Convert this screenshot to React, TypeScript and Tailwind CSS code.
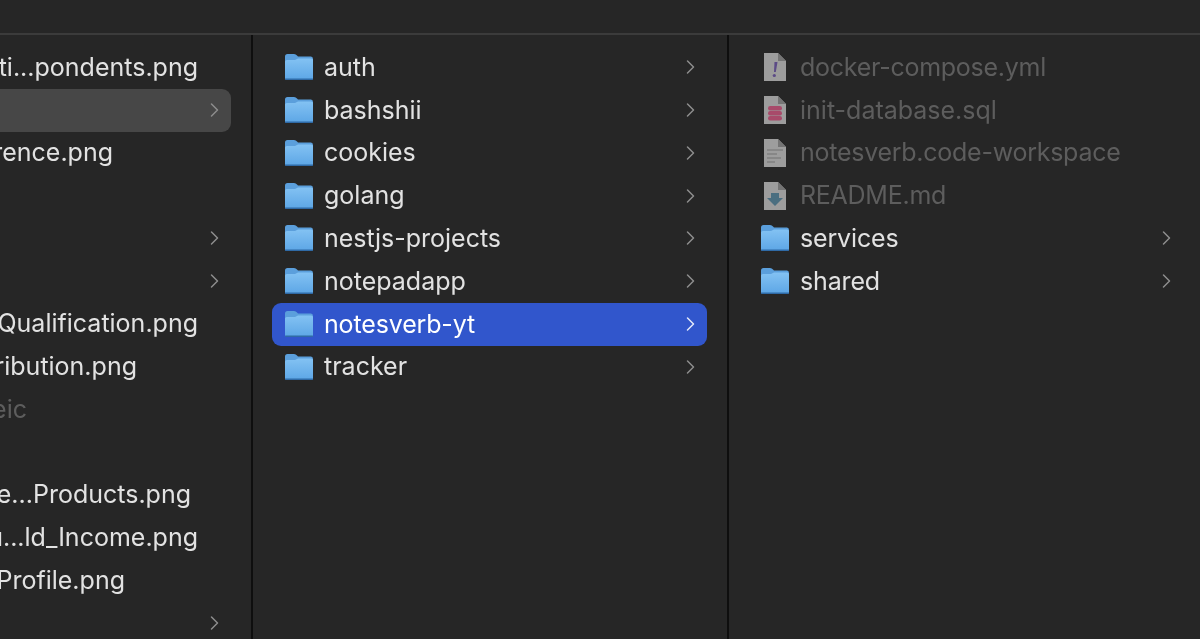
const font = "font-['Inter','Noto_Sans',sans-serif]";

function Chevron({ className = "text-[#8d8d8d]" }: { className?: string }) {
  return (
    <svg width="10" height="16" viewBox="0 0 10 16" fill="none" className={`shrink-0 ${className}`}>
      <path d="M2.500 2 L8.500 8 L2.500 14" stroke="currentColor" strokeWidth="1.500" strokeLinecap="round" strokeLinejoin="round" />
    </svg>
  );
}

function Folder({ id }: { id: string }) {
  return (
    <svg width="30" height="28" viewBox="0 0 30 28" className="shrink-0">
      <defs>
        <linearGradient id={id} x1="0" y1="0" x2="0" y2="1">
          <stop offset="0" stopColor="#83c2f3" />
          <stop offset="1" stopColor="#5ea7e6" />
        </linearGradient>
      </defs>
      <path d="M1 3.500 Q1 1 3.500 1 L10 1 Q12 1 13 2.500 L14 3.500 L27 3.500 Q29 3.500 29 6 L29 25 Q29 27 27 27 L3 27 Q1 27 1 25 Z" fill="#5b9fdc" />
      <path d="M1 8.500 Q1 7 3 7 L11 7 L14 5.500 L27 5.500 Q29 5.500 29 7 L29 25 Q29 26 27 26 L3 26 Q1 26 1 25 Z" fill={`url(#${id})`} />
      <rect x="1" y="25.500" width="28" height="1.500" rx="0.700" fill="#2f6aa6" />
    </svg>
  );
}

function Doc({ children }: { children?: React.ReactNode }) {
  return (
    <svg width="24" height="30" viewBox="0 0 24 30" className="shrink-0">
      <path d="M1 1 L15 1 L23 9 L23 29 L1 29 Z" fill="#9d9d9d" />
      <path d="M15 1 L23 9 L15 9 Z" fill="#747474" />
      {children}
    </svg>
  );
}

const IconWarn = () => (
  <Doc>
    <path d="M11.500 10 L14.500 10 L12.800 20 L11 20 Z" fill="#5b4a86" />
    <circle cx="11.300" cy="23.500" r="1.600" fill="#5b4a86" />
  </Doc>
);
const IconDb = () => (
  <Doc>
    <rect x="5" y="11" width="14" height="4.500" rx="2.200" fill="#a84a6a" />
    <rect x="5" y="16" width="14" height="4.500" rx="2.200" fill="#a84a6a" />
    <rect x="5" y="21" width="14" height="4.500" rx="2.200" fill="#a84a6a" />
  </Doc>
);
const IconLines = () => (
  <Doc>
    <path d="M4 12 H20 M4 16 H14 M4 20 H18 M4 24 H12" stroke="#808080" strokeWidth="1.300" />
  </Doc>
);
const IconMd = () => (
  <Doc>
    <path d="M8 12 H16 V17 H20 L12 25 L4 17 H8 Z" fill="#4a6e80" />
  </Doc>
);

const leftRows: { text?: string; width?: string; chev?: boolean; active?: boolean; dim?: boolean }[] = [
  { text: "Respondents_ti...pondents.png", width: "w-[198px]" },
  { active: true, chev: true },
  { text: "Preference.png", width: "w-[113px]" },
  {},
  { chev: true },
  { chev: true },
  { text: "Education_Qualification.png", width: "w-[198px]" },
  { text: "Age_Distribution.png", width: "w-[137px]" },
  { text: "photo.heic", width: "w-[27px]", dim: true },
  {},
  { text: "Preferred_e...Products.png", width: "w-[191px]" },
  { text: "Annu...ld_Income.png", width: "w-[198px]" },
  { text: "User_Profile.png", width: "w-[125px]" },
  { chev: true },
];

const midRows = ["auth", "bashshii", "cookies", "golang", "nestjs-projects", "notepadapp", "notesverb-yt", "tracker"];

export default function App() {
  return (
    <div className={`${font} w-[1200px] h-[639px] overflow-hidden bg-[#262626] flex flex-col text-[25px] leading-[43px] text-[#e2e2e2] antialiased blur-[0.35px]`}>
      <div className="h-[35px] shrink-0 border-b-2 border-[#3b3b3b]" />
      <div className="flex flex-1 min-h-0">
        <div className="w-[251px] shrink-0 pt-[11px] pr-[20px] overflow-hidden">
          {leftRows.map((r, i) => (
            <div key={i} className={`h-[42.750px] flex items-center justify-between pr-[12px] ${r.active ? "bg-[#474747] rounded-r-[9px]" : ""}`}>
              {r.text ? (
                <span className={`${r.width} flex justify-end overflow-hidden whitespace-nowrap ${r.dim ? "text-[#5d5d5d]" : ""}`}>
                  <span className="shrink-0">{r.text}</span>
                </span>
              ) : (
                <span />
              )}
              {r.chev && <Chevron />}
            </div>
          ))}
        </div>
        <div className="w-[2px] shrink-0 bg-[#0e0e0e]" />
        <div className="w-[474px] shrink-0 pt-[11px] pl-[19px] pr-[20px] overflow-hidden">
          {midRows.map((t) => {
            const sel = t === "notesverb-yt";
            return (
              <div key={t} className={`flex items-center pl-[12px] pr-[12px] gap-[10px] rounded-[9px] ${sel ? "h-[43px] -mb-[0.250px] bg-[#3156cc] text-white tracking-[-0.15px]" : "h-[42.750px]"}`}>
                <Folder id={`f-${t}`} />
                <span className="flex-1 whitespace-nowrap">{t}</span>
                <Chevron className={sel ? "text-[#e4e9fa]" : "text-[#8d8d8d]"} />
              </div>
            );
          })}
        </div>
        <div className="w-[2px] shrink-0 bg-[#0e0e0e]" />
        <div className="flex-1 pt-[11px] pl-[19px] pr-[17px] overflow-hidden">
          {[
            { t: "docker-compose.yml", I: IconWarn, track: "tracking-[-0.26px]" },
            { t: "init-database.sql", I: IconDb, track: "" },
            { t: "notesverb.code-workspace", I: IconLines, track: "tracking-[-0.26px]" },
            { t: "README.md", I: IconMd, track: "tracking-[-0.26px]" },
          ].map(({ t, I, track }) => (
            <div key={t} className={`h-[42.750px] flex items-center pl-[15px] gap-[13px] text-[#5d5d5d] ${track}`}>
              <I />
              <span className="whitespace-nowrap">{t}</span>
            </div>
          ))}
          {["services", "shared"].map((t) => (
            <div key={t} className="h-[42.750px] flex items-center pl-[12px] pr-[12px] gap-[10px] tracking-[-0.15px]">
              <Folder id={`f-${t}`} />
              <span className="flex-1 whitespace-nowrap">{t}</span>
              <Chevron />
            </div>
          ))}
        </div>
      </div>
    </div>
  );
}
